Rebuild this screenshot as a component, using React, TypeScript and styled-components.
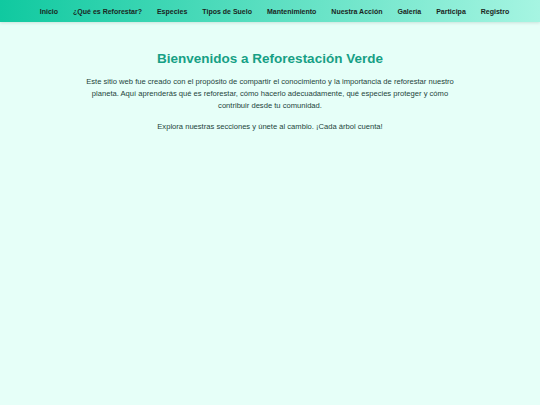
import React from 'react';
import styled, { createGlobalStyle } from 'styled-components';

const GlobalStyle = createGlobalStyle`
  html, body {
    margin: 0;
    padding: 0;
    background: #e6fff8;
    font-family: 'Liberation Sans', Arial, sans-serif;
  }
`;

const NavBar = styled.nav`
  display: flex;
  justify-content: center;
  align-items: center;
  height: 22px;
  padding-left: 9px;
  background: linear-gradient(90deg, #10c9a0, #a6f5e2);
  box-shadow: 0 1px 3px rgba(0, 0, 0, 0.12);
`;

const NavLink = styled.a`
  padding: 0 7.5px;
  font-size: 7px;
  font-weight: bold;
  color: #1a2522;
  text-decoration: none;
`;

const Main = styled.main`
  max-width: 380px;
  margin: 0 auto;
  padding-top: 29px;
  text-align: center;
`;

const Title = styled.h1`
  margin: 0 0 10px;
  font-size: 13.5px;
  font-weight: bold;
  color: #16a085;
`;

const Text = styled.p`
  margin: 0 0 9px;
  font-size: 7.6px;
  line-height: 12px;
  color: #23443b;
`;

const links = [
  'Inicio',
  '¿Qué es Reforestar?',
  'Especies',
  'Tipos de Suelo',
  'Mantenimiento',
  'Nuestra Acción',
  'Galería',
  'Participa',
  'Registro',
];

export default function App() {
  return (
    <>
      <GlobalStyle />
      <NavBar>
        {links.map((l) => (
          <NavLink key={l} href="#">
            {l}
          </NavLink>
        ))}
      </NavBar>
      <Main>
        <Title>Bienvenidos a Reforestación Verde</Title>
        <Text>
          Este sitio web fue creado con el propósito de compartir el conocimiento y la importancia de
          reforestar nuestro planeta. Aquí aprenderás qué es reforestar, cómo hacerlo adecuadamente, qué
          especies proteger y cómo contribuir desde tu comunidad.
        </Text>
        <Text>Explora nuestras secciones y únete al cambio. ¡Cada árbol cuenta!</Text>
      </Main>
    </>
  );
}
